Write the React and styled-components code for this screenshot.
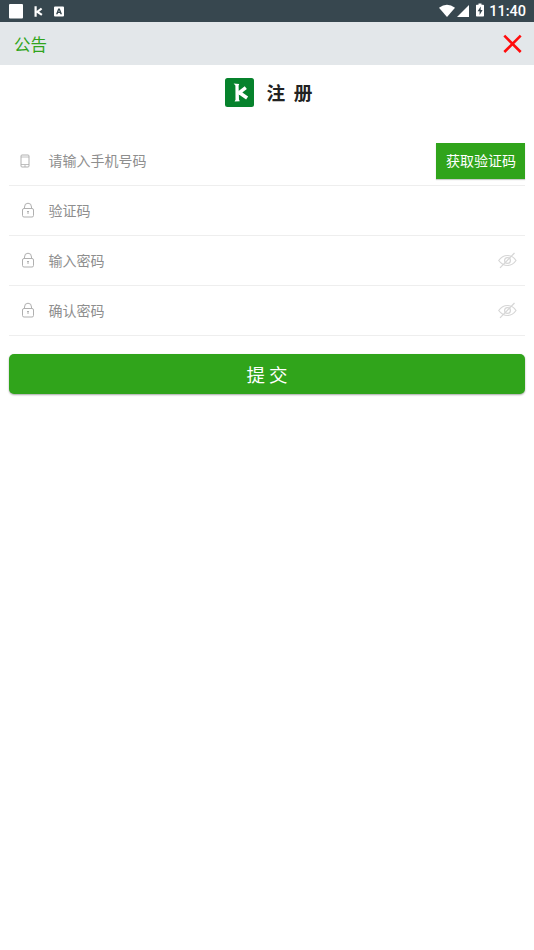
import React from "react";
import styled, { createGlobalStyle } from "styled-components";

const GlobalStyle = createGlobalStyle`
  * {
    box-sizing: border-box;
  }

  body {
    margin: 0;
    background: #fff;
    font-family: "Noto Sans CJK SC", sans-serif;
  }
`;

// Styled components
const Page = styled.div`
  min-height: 100vh;
  background: #fff;
`;

const StatusBar = styled.div`
  display: flex;
  align-items: center;
  justify-content: space-between;
  height: 22px;
  padding: 0 8px 0 9px;
  background: #37474f;
`;

const StatusIcons = styled.div`
  display: flex;
  align-items: center;
  height: 22px;
`;

const Clock = styled.span`
  margin-left: 5px;
  padding-top: 1px;
  color: #fff;
  font-family: Roboto, sans-serif;
  font-size: 14.5px;
  font-weight: 500;
  line-height: 22px;
`;

const NoticeBar = styled.header`
  display: flex;
  align-items: center;
  justify-content: space-between;
  height: 43px;
  padding: 0 12px 0 14px;
  background: #e3e7ea;
`;

const NoticeTitle = styled.span`
  padding-top: 2px;
  color: #30a41b;
  font-size: 16.5px;
  line-height: 41px;
`;

const CloseButton = styled.button`
  display: flex;
  padding: 0;
  border: 0;
  background: none;
`;

const Brand = styled.div`
  display: flex;
  align-items: center;
  justify-content: center;
  gap: 12px;
  height: 54px;
  padding-left: 4px;
`;

const BrandTitle = styled.h1`
  margin: 0;
  color: #222;
  font-size: 18.7px;
  font-weight: 700;
  line-height: 28px;
  word-spacing: 4.4px;
`;

const Form = styled.div`
  padding: 17px 9px 0;
`;

const Field = styled.div`
  display: flex;
  align-items: center;
  height: 50px;
  border-bottom: 1px solid #eee;
`;

const FieldIcon = styled.span`
  display: flex;
  justify-content: center;
  width: ${(props) => (props.$narrow ? "32px" : "38px")};
  margin-right: ${(props) => (props.$narrow ? "7.5px" : "1.5px")};
`;

const Placeholder = styled.span`
  flex: 1;
  padding-bottom: 2px;
  color: #8e8e8e;
  font-size: 14px;
  line-height: 20px;
`;

const EyeButton = styled.button`
  display: flex;
  margin-right: 8px;
  padding: 0;
  border: 0;
  background: none;
`;

const CodeButton = styled.button`
  width: 89px;
  height: 36px;
  padding: 0 0 2px 1px;
  border: 0;
  background: #30a41b;
  box-shadow: 0 1px 1px rgba(0, 0, 0, 0.2);
  color: #fff;
  font-family: inherit;
  font-size: 14px;
  line-height: 34px;
`;

const SubmitButton = styled.button`
  display: block;
  width: 100%;
  height: 40px;
  margin-top: 18px;
  padding: 0;
  border: 0;
  border-radius: 5px;
  background: #30a41b;
  box-shadow: 0 1px 2px rgba(0, 0, 0, 0.35);
  color: #fff;
  font-family: inherit;
  font-size: 18.5px;
  line-height: 40px;
`;

// Icons
const NotificationIcons = () => (
  <svg width="56" height="22" viewBox="0 0 56 22" fill="#fff">
    <rect x="0" y="4" width="14" height="14.5" rx="1" />
    <path d="M26.600 6.300v10.400M28 12.200l4.600-3.700M28 11.600l4.900 3.300" fill="none" stroke="#fff" strokeWidth="2.200" />
    <path
      fillRule="evenodd"
      d="M46 6.500h8q1 0 1 1v8q0 1-1 1h-8q-1 0-1-1v-8q0-1 1-1zM49.2 8.500L47 14.2h1.600l.4-1.1h2l.4 1.1H53L50.8 8.500zM50 10l.6 1.800h-1.200z"
    />
  </svg>
);

const SignalIcons = () => (
  <svg width="46" height="22" viewBox="0 0 46 22" fill="#fff">
    <path d="M1 7.800Q9 1.500 17 7.800L9 17z" />
    <path d="M31 5v12H19z" />
    <path
      fillRule="evenodd"
      d="M40.500 3.500h3v1.300h1.700q.8 0 .8.8v10.200q0 .8-.8.8h-6.400q-.8 0-.8-.8V5.600q0-.8.8-.8h1.700zM42.700 6.500L39.600 11.300h2v3.600l3-4.800h-1.900z"
    />
  </svg>
);

const CloseIcon = () => (
  <svg width="19" height="19" viewBox="0 0 19 19" stroke="#ff0c0c" strokeWidth="2.600">
    <path d="M1.300 1.600l16.400 16.400M17.700 1.600L1.300 18" />
  </svg>
);

const Logo = () => (
  <svg width="29" height="29" viewBox="0 0 29 29">
    <rect width="29" height="29" rx="2.500" fill="#06822c" />
    <path fill="#fff" d="M8.600 5.400l5.600.600-.6 1.700.4 13.800.800 1.700-5.200.300.900-1.800-.1-14.200z" />
    <path d="M13 15.600l7.800-6M13.500 14l8.600 6" stroke="#fff" strokeWidth="3.500" />
  </svg>
);

const PhoneIcon = () => (
  <svg width="10" height="14" viewBox="0 0 10 14" fill="none" stroke="#b0b0b0">
    <rect x="1" y="1" width="8" height="12" rx="1" />
    <path d="M1 3h8M1 10.500h8M4 12h2" strokeWidth=".8" />
  </svg>
);

const LockIcon = () => (
  <svg width="14" height="18" viewBox="0 0 14 18" fill="none" stroke="#b0b0b0">
    <rect x="1.500" y="6.500" width="11" height="8.500" rx="1.500" />
    <path d="M3.500 6.500V5a3.500 3.800 0 0 1 7 0v1.500" />
    <path d="M6 9.500h2M7 9v3" />
  </svg>
);

const EyeOffIcon = () => (
  <svg width="19" height="17" viewBox="0 0 19 17" fill="none" stroke="#d6d6d6" strokeWidth="1.200">
    <path d="M.700 8.500q3.500-5 8.800-5t8.500 5q-3.500 5-8.500 5t-8.800-5z" />
    <circle cx="9.500" cy="8.500" r="2.900" />
    <path d="M2 15.800L16.500 1" />
  </svg>
);

// Fields below the phone number row
const fields = [
  { label: "验证码", secret: false },
  { label: "输入密码", secret: true },
  { label: "确认密码", secret: true }
];

const App = () => {
  return (
    <Page>
      <GlobalStyle />
      <StatusBar>
        <StatusIcons>
          <NotificationIcons />
        </StatusIcons>
        <StatusIcons>
          <SignalIcons />
          <Clock>11:40</Clock>
        </StatusIcons>
      </StatusBar>
      <NoticeBar>
        <NoticeTitle>公告</NoticeTitle>
        <CloseButton aria-label="关闭">
          <CloseIcon />
        </CloseButton>
      </NoticeBar>
      <Brand>
        <Logo />
        <BrandTitle>注 册</BrandTitle>
      </Brand>
      <Form>
        <Field>
          <FieldIcon $narrow>
            <PhoneIcon />
          </FieldIcon>
          <Placeholder>请输入手机号码</Placeholder>
          <CodeButton>获取验证码</CodeButton>
        </Field>
        {fields.map((field) => (
          <Field key={field.label}>
            <FieldIcon>
              <LockIcon />
            </FieldIcon>
            <Placeholder>{field.label}</Placeholder>
            {field.secret && (
              <EyeButton aria-label="显示密码">
                <EyeOffIcon />
              </EyeButton>
            )}
          </Field>
        ))}
        <SubmitButton>提 交</SubmitButton>
      </Form>
    </Page>
  );
};

export default App;
